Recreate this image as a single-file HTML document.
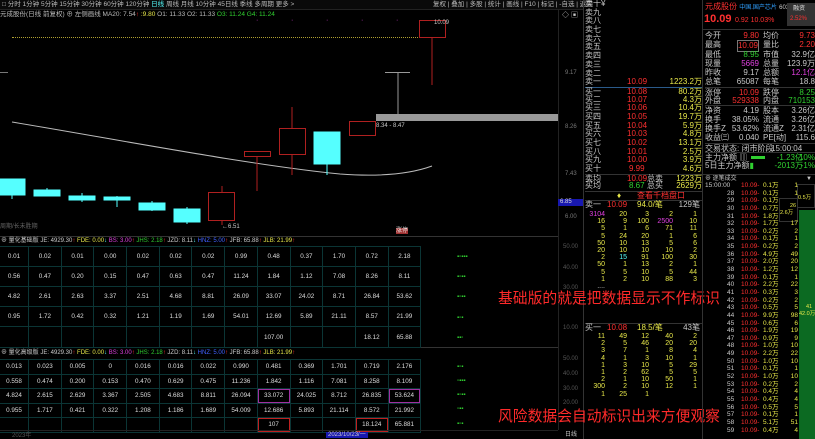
<!DOCTYPE html>
<html><head><meta charset="utf-8"><style>
*{margin:0;padding:0;box-sizing:border-box}
body{width:815px;height:439px;background:#000;overflow:hidden;position:relative;font-family:"Liberation Sans","Noto Sans CJK SC",sans-serif;color:#c8c8c8;font-size:7px}
.a{position:absolute;white-space:nowrap;line-height:1}
.r{color:#ff3030}.y{color:#e8e84a}.g{color:#30d030}.c{color:#5ff}.m{color:#e040e0}.w{color:#ddd}.b{color:#4060ff}
.cn{font-family:"Liberation Sans","Noto Sans CJK SC",sans-serif}
table{border-collapse:collapse;position:absolute;table-layout:fixed}
td{border:1px solid #0b3535;text-align:center;color:#ddd;font-size:6.3px;padding:0}
.ob div{height:8.7px;line-height:8.7px;font-size:8px;position:relative}
.ob span{position:absolute}
.rp div{height:9.3px;line-height:9.3px;font-size:8px;position:relative}
.rp span{position:absolute}
.tl div{height:7.65px;line-height:7.65px;font-size:6.5px;position:relative}
.tl span{position:absolute}
.ng div{height:7.2px;line-height:7.2px;font-size:7px;position:relative}
.ng span{position:absolute;width:20px;text-align:right}
</style></head><body>
<div class="a" style="left:0;top:0;width:583px;height:10px;background:#0a0a0a;border-bottom:1px solid #222"></div>
<div class="a cn" style="left:2px;top:2px;font-size:6.5px;color:#bbb">□ 分时 1分钟 5分钟 15分钟 30分钟 60分钟 120分钟 <span class="c">日线</span> 周线 月线 10分钟 45日线 季线 多周期 更多 &gt;</div>
<div class="a cn" style="left:433px;top:2px;font-size:6.5px;color:#bbb">复权 | 叠加 | 多股 | 统计 | 画线 | F10 | 标记 | -自选 | 返回</div>
<div class="a cn" style="left:0;top:12px;font-size:6.5px;color:#bbb">元成股份(日线 前复权) ⊕ 左侧画线 MA20: 7.54<span class="r">↑</span> <span class="y">:9.80</span> O1: 11.33 O2: 11.33 <span class="g">O3: 11.24 G4: 11.24</span></div>
<div class="a" style="left:562px;top:12px;font-size:7px">◇ ▣</div>
<div class="a" style="left:12px;top:37px;width:420px;border-top:1px dotted #b0a030"></div>
<div class="a m" style="left:256px;top:17px">·</div><div class="a m" style="left:291px;top:17px">·</div><div class="a m" style="left:326px;top:17px">·</div><div class="a m" style="left:361px;top:17px">·</div><div class="a m" style="left:396px;top:17px">·</div>
<svg class="a" style="left:0;top:0" width="558" height="236">
<path d="M12 122 C120 140 250 165 340 174 C380 177 410 174 432 166" stroke="#bbb" stroke-width="1" fill="none"/>
<g fill="#5ff" stroke="#5ff">
<rect x="0" y="179" width="25" height="16"/><line x1="12" y1="195" x2="12" y2="199"/>
<rect x="34" y="190" width="26" height="6"/><line x1="47" y1="188" x2="47" y2="190"/>
<rect x="69" y="196" width="26" height="4"/><line x1="82" y1="193" x2="82" y2="202"/>
<rect x="104" y="197" width="26" height="3"/><line x1="117" y1="196" x2="117" y2="207"/>
<rect x="139" y="203" width="26" height="7"/><line x1="152" y1="201" x2="152" y2="211"/>
<rect x="174" y="209" width="26" height="13"/><line x1="187" y1="207" x2="187" y2="224"/>
<rect x="314" y="132" width="26" height="32"/><line x1="327" y1="164" x2="327" y2="175"/>
</g>
<g fill="none" stroke="#b02020">
<rect x="208.5" y="192.5" width="26" height="28"/><line x1="222" y1="186" x2="222" y2="192"/><line x1="222" y1="221" x2="222" y2="225"/>
<rect x="244.5" y="151.5" width="26" height="5"/><line x1="257" y1="157" x2="257" y2="191"/>
<rect x="279.5" y="128.5" width="26" height="26"/><line x1="292" y1="107" x2="292" y2="128"/><line x1="292" y1="155" x2="292" y2="175"/>
<rect x="349.5" y="121.5" width="26" height="14"/>
<rect x="419.5" y="20.5" width="26" height="17"/><line x1="432" y1="38" x2="432" y2="85"/>
</g>
<line x1="385" y1="72.5" x2="410" y2="72.5" stroke="#999"/><line x1="398" y1="72" x2="398" y2="114" stroke="#999"/>
<rect x="376" y="114" width="183" height="7" fill="#999"/>
<line x1="0" y1="72.5" x2="8" y2="72.5" stroke="#777"/>
</svg>
<div class="a" style="left:376px;top:123px;font-size:6px">8.34 - 8.47</div>
<div class="a" style="left:434px;top:20px;font-size:6px">10.09</div>
<div class="a" style="left:222px;top:224px;font-size:6px">←6.51</div>
<div class="a cn" style="left:0;top:224px;font-size:6px;color:#666">周期/长未胜期</div>
<div class="a cn" style="left:396px;top:228px;font-size:6px;background:#a03030;color:#eee">涨停</div>
<div class="a" style="left:558px;top:10px;width:1px;height:420px;background:#222"></div>
<div class="a" style="left:583px;top:0;width:1px;height:439px;background:#333"></div>
<div class="a" style="left:565px;top:70px;font-size:6px;color:#777">9.17</div>
<div class="a" style="left:565px;top:124px;font-size:6px;color:#777">8.26</div>
<div class="a" style="left:565px;top:171px;font-size:6px;color:#777">7.43</div>
<div class="a" style="left:558px;top:199px;width:25px;height:7px;background:#1818b0;font-size:6px;color:#ddd;padding-left:2px">6.85</div>
<div class="a" style="left:565px;top:214px;font-size:6px;color:#777">6.00</div>
<div class="a" style="left:563px;top:244px;font-size:6px;color:#555">50.00</div>
<div class="a" style="left:563px;top:265px;font-size:6px;color:#555">40.00</div>
<div class="a" style="left:563px;top:285px;font-size:6px;color:#555">30.00</div>
<div class="a" style="left:563px;top:325px;font-size:6px;color:#555">10.00</div>
<div class="a" style="left:563px;top:356px;font-size:6px;color:#555">50.00</div>
<div class="a" style="left:563px;top:371px;font-size:6px;color:#555">40.00</div>
<div class="a" style="left:563px;top:386px;font-size:6px;color:#555">30.00</div>
<div class="a" style="left:563px;top:400px;font-size:6px;color:#555">20.00</div>
<div class="a cn" style="left:565px;top:432px;font-size:6px">日线</div>
<div class="a" style="left:0;top:236px;width:558px;border-top:1px solid #333"></div>
<div class="a cn" style="left:1px;top:238px;font-size:6px;color:#ccc">⊕ 量化基础版 JE: 4929.30<span class="r">↑</span> <span class="y">FDE: 0.00</span><span class="c">↓</span> <span class="m">BS: 3.00</span><span class="r">↑</span> <span class="g">JHS: 2.18</span><span class="r">↑</span> JZD: 8.11<span class="c">↓</span> <span class="b">HNZ: 5.00</span><span class="r">↑</span> JFB: 65.88<span class="r">↑</span> <span class="y">JLB: 21.99</span><span class="r">↑</span></div>
<div class="a" style="left:0;top:347px;width:558px;border-top:1px solid #333"></div>
<div class="a cn" style="left:1px;top:350px;font-size:6px;color:#ccc">⊕ 量化高级版 JE: 4929.30<span class="r">↑</span> <span class="y">FDE: 0.00</span><span class="c">↓</span> <span class="m">BS: 3.00</span><span class="r">↑</span> <span class="g">JHS: 2.18</span><span class="r">↑</span> JZD: 8.11<span class="c">↓</span> <span class="b">HNZ: 5.00</span><span class="r">↑</span> JFB: 65.88<span class="r">↑</span> <span class="y">JLB: 21.99</span><span class="r">↑</span></div>
<table style="left:-1px;top:246px;width:421px">
<colgroup><col style="width:29px"><col span="12" style="width:32.7px"></colgroup>
<tr style="height:20px"><td>0.01</td><td>0.02</td><td>0.01</td><td>0.00</td><td>0.02</td><td>0.02</td><td>0.02</td><td>0.99</td><td>0.48</td><td>0.37</td><td>1.70</td><td>0.72</td><td>2.18</td></tr>
<tr style="height:20px"><td>0.56</td><td>0.47</td><td>0.20</td><td>0.15</td><td>0.47</td><td>0.63</td><td>0.47</td><td>11.24</td><td>1.84</td><td>1.12</td><td>7.08</td><td>8.26</td><td>8.11</td></tr>
<tr style="height:20px"><td>4.82</td><td>2.61</td><td>2.63</td><td>3.37</td><td>2.51</td><td>4.68</td><td>8.81</td><td>26.09</td><td>33.07</td><td>24.02</td><td>8.71</td><td>26.84</td><td>53.62</td></tr>
<tr style="height:20px"><td>0.95</td><td>1.72</td><td>0.42</td><td>0.32</td><td>1.21</td><td>1.19</td><td>1.69</td><td>54.01</td><td>12.69</td><td>5.89</td><td>21.11</td><td>8.57</td><td>21.99</td></tr>
<tr style="height:21px"><td></td><td></td><td></td><td></td><td></td><td></td><td></td><td></td><td>107.00</td><td></td><td></td><td>18.12</td><td>65.88</td></tr>
</table>
<table style="left:-1px;top:359px;width:421px">
<colgroup><col style="width:29px"><col span="12" style="width:32.7px"></colgroup>
<tr style="height:14.5px"><td>0.013</td><td>0.023</td><td>0.005</td><td>0</td><td>0.016</td><td>0.016</td><td>0.022</td><td>0.990</td><td>0.481</td><td>0.369</td><td>1.701</td><td>0.719</td><td>2.176</td></tr>
<tr style="height:14.5px"><td>0.558</td><td>0.474</td><td>0.200</td><td>0.153</td><td>0.470</td><td>0.629</td><td>0.475</td><td>11.236</td><td>1.842</td><td>1.116</td><td>7.081</td><td>8.258</td><td>8.109</td></tr>
<tr style="height:14.5px"><td>4.824</td><td>2.615</td><td>2.629</td><td>3.367</td><td>2.505</td><td>4.683</td><td>8.811</td><td>26.094</td><td style="box-shadow:inset 0 0 0 1px #a030a0">33.072</td><td>24.025</td><td>8.712</td><td>26.835</td><td style="box-shadow:inset 0 0 0 1px #a030a0">53.624</td></tr>
<tr style="height:14.5px"><td>0.955</td><td>1.717</td><td>0.421</td><td>0.322</td><td>1.208</td><td>1.186</td><td>1.689</td><td>54.009</td><td>12.686</td><td>5.893</td><td>21.114</td><td>8.572</td><td>21.992</td></tr>
<tr style="height:14.5px"><td></td><td></td><td></td><td></td><td></td><td></td><td></td><td></td><td style="box-shadow:inset 0 0 0 1px #c02020">107</td><td></td><td></td><td style="box-shadow:inset 0 0 0 1px #c02020">18.124</td><td>65.881</td></tr>
</table>
<div class="a g" style="left:457px;top:254px;font-size:6px">▪▫▪▪▪</div>
<div class="a g" style="left:457px;top:274px;font-size:6px">▪▫▪▪</div>
<div class="a g" style="left:457px;top:294px;font-size:6px">▪▫▪▪</div>
<div class="a g" style="left:457px;top:315px;font-size:6px">▪▫▪</div>
<div class="a g" style="left:457px;top:335px;font-size:6px">▪▪▫</div>
<div class="a g" style="left:457px;top:364px;font-size:6px">▪▫▪</div>
<div class="a g" style="left:457px;top:378px;font-size:6px">▫▪▪▪</div>
<div class="a g" style="left:457px;top:392px;font-size:6px">▪▫▪▪</div>
<div class="a g" style="left:457px;top:406px;font-size:6px">▫▪▪</div>
<div class="a g" style="left:457px;top:421px;font-size:6px">▪▫▪</div>
<div class="a" style="left:0;top:430px;width:558px;border-top:1px solid #222"></div>
<div class="a" style="left:12px;top:433px;font-size:6px;color:#555">2023年</div>
<div class="a" style="left:326px;top:432px;font-size:6px;background:#1818b0;color:#ccc;padding:0 2px">2023/10/23/一</div>
<div class="a cn" style="left:498px;top:292px;font-size:14.8px;color:#ff2a2a">基础版的就是把数据显示不作标识</div>
<div class="a cn" style="left:498px;top:410px;font-size:14.8px;color:#ff2a2a">风险数据会自动标识出来方便观察</div>
<div class="a ob cn" style="left:585px;top:0;width:117px">
<div><span>卖十¥</span></div><div><span>卖九</span></div><div><span>卖八</span></div><div><span>卖七</span></div><div><span>卖六</span></div><div><span>卖五</span></div><div><span>卖四</span></div><div><span>卖三</span></div><div><span>卖二</span></div>
<div><span>卖一</span><span class="r" style="left:42px">10.09</span><span class="y" style="right:0">1223.2万</span></div>
<div style="border-top:1px solid #2a5a8a"><span>买一</span><span class="r" style="left:42px">10.08</span><span class="y" style="right:0">80.2万</span></div>
<div><span>买二</span><span class="r" style="left:42px">10.07</span><span class="y" style="right:0">4.3万</span></div>
<div><span>买三</span><span class="r" style="left:42px">10.06</span><span class="y" style="right:0">10.4万</span></div>
<div><span>买四</span><span class="r" style="left:42px">10.05</span><span class="y" style="right:0">19.7万</span></div>
<div><span>买五</span><span class="r" style="left:42px">10.04</span><span class="y" style="right:0">5.9万</span></div>
<div><span>买六</span><span class="r" style="left:42px">10.03</span><span class="y" style="right:0">4.8万</span></div>
<div><span>买七</span><span class="r" style="left:42px">10.02</span><span class="y" style="right:0">13.1万</span></div>
<div><span>买八</span><span class="r" style="left:42px">10.01</span><span class="y" style="right:0">2.5万</span></div>
<div><span>买九</span><span class="r" style="left:42px">10.00</span><span class="y" style="right:0">3.9万</span></div>
<div><span>买十</span><span class="r" style="left:44px">9.99</span><span class="y" style="right:0">4.6万</span></div>
<div style="border-top:1px solid #333"><span>卖均</span><span class="r" style="left:42px">10.09</span><span style="left:62px">总卖</span><span class="y" style="right:0">1223万</span></div>
<div><span>买均</span><span class="g" style="left:44px">8.67</span><span style="left:62px">总买</span><span class="y" style="right:0">2629万</span></div>
<div style="border-top:1px solid #333"><span class="y" style="left:32px">♦</span><span class="r" style="left:52px">查看千档盘口</span></div>
<div style="border-top:1px solid #333"><span>卖一</span><span class="r" style="left:22px">10.09</span><span class="y" style="left:52px">94.0/笔</span><span style="right:2px">129笔</span></div>
</div>
<div class="a ng y" style="left:585px;top:211px;width:117px">
<div><span class="m" style="left:0">3104</span><span style="left:22px">20</span><span style="left:44px">3</span><span style="left:68px">2</span><span style="left:92px">1</span></div>
<div><span style="left:0">16</span><span style="left:22px">9</span><span style="left:44px">100</span><span class="m" style="left:68px">2500</span><span style="left:92px">10</span></div>
<div><span style="left:0">5</span><span style="left:22px">1</span><span style="left:44px">6</span><span style="left:68px">71</span><span style="left:92px">11</span></div>
<div><span style="left:0">5</span><span style="left:22px">24</span><span style="left:44px">20</span><span style="left:68px">1</span><span style="left:92px">6</span></div>
<div><span style="left:0">50</span><span style="left:22px">10</span><span style="left:44px">13</span><span style="left:68px">5</span><span style="left:92px">6</span></div>
<div><span style="left:0">20</span><span style="left:22px">10</span><span style="left:44px">10</span><span style="left:68px">10</span><span style="left:92px">2</span></div>
<div><span style="left:0">2</span><span class="c" style="left:22px">15</span><span style="left:44px">91</span><span style="left:68px">100</span><span style="left:92px">30</span></div>
<div><span style="left:0">50</span><span style="left:22px">1</span><span style="left:44px">13</span><span style="left:68px">2</span><span style="left:92px">1</span></div>
<div><span style="left:0">5</span><span style="left:22px">5</span><span style="left:44px">10</span><span style="left:68px">5</span><span style="left:92px">44</span></div>
<div><span style="left:0">1</span><span style="left:22px">2</span><span style="left:44px">10</span><span style="left:68px">88</span><span style="left:92px">3</span></div>
<div><span style="left:0;color:#ccc">....</span></div>
</div>
<div class="a ob cn" style="left:585px;top:323px;width:117px;border-top:1px solid #333">
<div><span>买一</span><span class="r" style="left:22px">10.08</span><span class="y" style="left:52px">18.5/笔</span><span style="right:2px">43笔</span></div>
</div>
<div class="a ng y" style="left:585px;top:333px;width:117px">
<div><span style="left:0">11</span><span style="left:22px">49</span><span style="left:44px">12</span><span style="left:68px">40</span><span style="left:92px">2</span></div>
<div><span style="left:0">2</span><span style="left:22px">5</span><span style="left:44px">46</span><span style="left:68px">20</span><span style="left:92px">20</span></div>
<div><span style="left:0">3</span><span style="left:22px">7</span><span style="left:44px">1</span><span style="left:68px">8</span><span style="left:92px">4</span></div>
<div><span style="left:0">4</span><span style="left:22px">1</span><span style="left:44px">3</span><span style="left:68px">10</span><span style="left:92px">1</span></div>
<div><span style="left:0">1</span><span style="left:22px">3</span><span style="left:44px">10</span><span style="left:68px">5</span><span style="left:92px">29</span></div>
<div><span style="left:0">1</span><span style="left:22px">2</span><span style="left:44px">62</span><span style="left:68px">5</span><span style="left:92px">5</span></div>
<div><span style="left:0">2</span><span style="left:22px">1</span><span style="left:44px">10</span><span style="left:68px">50</span><span style="left:92px">1</span></div>
<div><span style="left:0">300</span><span style="left:22px">2</span><span style="left:44px">10</span><span style="left:68px">12</span><span style="left:92px">1</span></div>
<div><span style="left:0">1</span><span style="left:22px">25</span><span style="left:44px">1</span></div>
</div>
<div class="a" style="left:702px;top:0;width:1px;height:439px;background:#333"></div>
<div class="a cn r" style="left:705px;top:3px;font-size:8px">元成股份 <span style="color:#30a0ff;font-size:6px">中国.国产芯片</span> <span style="color:#ccc;font-size:6px">603388</span></div>
<div class="a" style="left:787px;top:3px;width:28px;height:23px;background:#333"></div>
<div class="a cn" style="left:793px;top:6px;font-size:6px;color:#ddd">融资</div>
<div class="a r" style="left:790px;top:16px;font-size:6px">2.52%</div>
<div class="a r" style="left:704px;top:14px;font-size:11px;font-weight:bold">10.09</div>
<div class="a r" style="left:735px;top:17px;font-size:7px">0.92 10.03%</div>
<div class="a" style="left:703px;top:29px;width:112px;border-top:1px solid #333"></div>
<div class="a rp cn" style="left:705px;top:31px;width:110px">
<div><span>今开</span><span class="r" style="right:56px">9.80</span><span style="left:58px">均价</span><span class="r" style="right:0">9.73</span></div>
<div><span>最高</span><span class="r" style="right:56px;border:1px solid #777">10.09</span><span style="left:58px">量比</span><span class="r" style="right:0">2.20</span></div>
<div><span>最低</span><span class="g" style="right:56px">8.95</span><span style="left:58px">市值</span><span style="right:0">32.9亿</span></div>
<div><span>现量</span><span class="m" style="right:56px">5669</span><span style="left:58px">总量</span><span style="right:0">123.9万</span></div>
<div><span>昨收</span><span style="right:56px">9.17</span><span style="left:58px">总额</span><span class="m" style="right:0">12.1亿</span></div>
<div><span>总笔</span><span style="right:56px">65087</span><span style="left:58px">每笔</span><span style="right:0">18.8</span></div>
<div style="border-top:1px solid #333"><span>涨停</span><span class="r" style="right:56px">10.09</span><span style="left:58px">跌停</span><span class="g" style="right:0">8.25</span></div>
<div><span>外盘</span><span class="r" style="right:56px">529338</span><span style="left:58px">内盘</span><span class="g" style="right:0">710153</span></div>
<div style="border-top:1px solid #333"><span>净资</span><span style="right:56px">4.19</span><span style="left:58px">股本</span><span style="right:0">3.26亿</span></div>
<div><span>换手</span><span style="right:56px">38.05%</span><span style="left:58px">流通</span><span style="right:0">3.26亿</span></div>
<div><span>换手Z</span><span style="right:56px">53.62%</span><span style="left:58px">流通Z</span><span style="right:0">2.31亿</span></div>
<div><span>收益㈢</span><span style="right:56px">0.040</span><span style="left:58px">PE[动]</span><span style="right:0">115.6</span></div>
<div style="border-top:1px solid #333"><span>交易状态: 闭市阶段</span><span style="left:66px">15:00:04</span></div>
<div style="border-top:1px solid #333"><span>主力净额 ▥</span><span style="left:46px;top:3px;width:14px;height:3px;background:#30d030"></span><span class="g" style="right:12px">-1.23亿</span><span class="g" style="right:0">-10%</span></div>
<div><span>5日主力净额 <span class="g">▮</span></span><span class="g" style="right:12px">-2013万</span><span class="g" style="right:0">-1%</span></div>
</div>
<div class="a" style="left:703px;top:174px;width:112px;height:8px;border-top:1px solid #333"></div>
<div class="a cn" style="left:705px;top:176px;font-size:6px">⊕ 逐笔成交</div><div class="a" style="left:806px;top:176px;font-size:6px">▼</div>
<div class="a" style="left:799px;top:210px;width:16px;height:229px;background:#0c6a22"></div>
<div class="a" style="left:779px;top:198px;width:19px;height:24px;border:1px solid #333;background:#000"></div>
<div class="a" style="left:797px;top:184px;width:18px;height:24px;border:1px solid #333;background:#000"></div>
<div class="a y" style="left:798px;top:196px;font-size:5.5px">0.5万</div>
<div class="a y" style="left:790px;top:204px;font-size:5.5px">26</div>
<div class="a y" style="left:780px;top:211px;font-size:5.5px">2.6万</div>
<div class="a y" style="left:806px;top:305px;font-size:5.5px">41</div>
<div class="a y" style="left:799px;top:312px;font-size:5.5px">42.0万</div>
<div class="a tl" style="left:703px;top:182px;width:95px">
<div><span style="left:2px">15:00:00</span><span class="r" style="left:38px">10.09-</span><span class="y" style="left:60px">0.1万</span><span class="y" style="right:0">1</span></div>
<div><span style="left:24px">28</span><span class="r" style="left:38px">10.09-</span><span class="y" style="left:60px">0.1万</span><span class="y" style="right:0">1</span></div>
<div><span style="left:24px">29</span><span class="r" style="left:38px">10.09-</span><span class="y" style="left:60px">0.1万</span></div>
<div><span style="left:24px">30</span><span class="r" style="left:38px">10.09-</span><span class="y" style="left:60px">0.7万</span></div>
<div><span style="left:24px">31</span><span class="r" style="left:38px">10.09-</span><span class="y" style="left:60px">1.8万</span></div>
<div><span style="left:24px">32</span><span class="r" style="left:38px">10.09-</span><span class="y" style="left:60px">1.7万</span><span class="y" style="right:0">17</span></div>
<div><span style="left:24px">33</span><span class="r" style="left:38px">10.09-</span><span class="y" style="left:60px">0.2万</span><span class="y" style="right:0">2</span></div>
<div><span style="left:24px">34</span><span class="r" style="left:38px">10.09-</span><span class="y" style="left:60px">0.1万</span><span class="y" style="right:0">1</span></div>
<div><span style="left:24px">35</span><span class="r" style="left:38px">10.09-</span><span class="y" style="left:60px">0.2万</span><span class="y" style="right:0">2</span></div>
<div><span style="left:24px">36</span><span class="r" style="left:38px">10.09-</span><span class="y" style="left:60px">4.9万</span><span class="y" style="right:0">49</span></div>
<div><span style="left:24px">37</span><span class="r" style="left:38px">10.09-</span><span class="y" style="left:60px">2.0万</span><span class="y" style="right:0">20</span></div>
<div><span style="left:24px">38</span><span class="r" style="left:38px">10.09-</span><span class="y" style="left:60px">1.2万</span><span class="y" style="right:0">12</span></div>
<div><span style="left:24px">39</span><span class="r" style="left:38px">10.09-</span><span class="y" style="left:60px">0.1万</span><span class="y" style="right:0">1</span></div>
<div><span style="left:24px">40</span><span class="r" style="left:38px">10.09-</span><span class="y" style="left:60px">2.2万</span><span class="y" style="right:0">22</span></div>
<div><span style="left:24px">41</span><span class="r" style="left:38px">10.09-</span><span class="y" style="left:60px">0.3万</span><span class="y" style="right:0">3</span></div>
<div><span style="left:24px">42</span><span class="r" style="left:38px">10.09-</span><span class="y" style="left:60px">0.2万</span><span class="y" style="right:0">2</span></div>
<div><span style="left:24px">43</span><span class="r" style="left:38px">10.09-</span><span class="y" style="left:60px">0.5万</span><span class="y" style="right:0">5</span></div>
<div><span style="left:24px">44</span><span class="r" style="left:38px">10.09-</span><span class="y" style="left:60px">9.9万</span><span class="y" style="right:0">98</span></div>
<div><span style="left:24px">45</span><span class="r" style="left:38px">10.09-</span><span class="y" style="left:60px">0.6万</span><span class="y" style="right:0">6</span></div>
<div><span style="left:24px">46</span><span class="r" style="left:38px">10.09-</span><span class="y" style="left:60px">1.9万</span><span class="y" style="right:0">19</span></div>
<div><span style="left:24px">47</span><span class="r" style="left:38px">10.09-</span><span class="y" style="left:60px">0.9万</span><span class="y" style="right:0">9</span></div>
<div><span style="left:24px">48</span><span class="r" style="left:38px">10.09-</span><span class="y" style="left:60px">1.0万</span><span class="y" style="right:0">10</span></div>
<div><span style="left:24px">49</span><span class="r" style="left:38px">10.09-</span><span class="y" style="left:60px">2.2万</span><span class="y" style="right:0">22</span></div>
<div><span style="left:24px">50</span><span class="r" style="left:38px">10.09-</span><span class="y" style="left:60px">1.0万</span><span class="y" style="right:0">10</span></div>
<div><span style="left:24px">51</span><span class="r" style="left:38px">10.09-</span><span class="y" style="left:60px">0.1万</span><span class="y" style="right:0">1</span></div>
<div><span style="left:24px">52</span><span class="r" style="left:38px">10.09-</span><span class="y" style="left:60px">1.0万</span><span class="y" style="right:0">10</span></div>
<div><span style="left:24px">53</span><span class="r" style="left:38px">10.09-</span><span class="y" style="left:60px">0.2万</span><span class="y" style="right:0">2</span></div>
<div><span style="left:24px">54</span><span class="r" style="left:38px">10.09-</span><span class="y" style="left:60px">0.4万</span><span class="y" style="right:0">4</span></div>
<div><span style="left:24px">55</span><span class="r" style="left:38px">10.09-</span><span class="y" style="left:60px">0.4万</span><span class="y" style="right:0">4</span></div>
<div><span style="left:24px">56</span><span class="r" style="left:38px">10.09-</span><span class="y" style="left:60px">0.5万</span><span class="y" style="right:0">5</span></div>
<div><span style="left:24px">57</span><span class="r" style="left:38px">10.09-</span><span class="y" style="left:60px">0.1万</span><span class="y" style="right:0">1</span></div>
<div><span style="left:24px">58</span><span class="r" style="left:38px">10.09-</span><span class="y" style="left:60px">5.1万</span><span class="y" style="right:0">51</span></div>
<div><span style="left:24px">59</span><span class="r" style="left:38px">10.09-</span><span class="y" style="left:60px">0.4万</span><span class="y" style="right:0">4</span></div>
</div>
</body></html>
